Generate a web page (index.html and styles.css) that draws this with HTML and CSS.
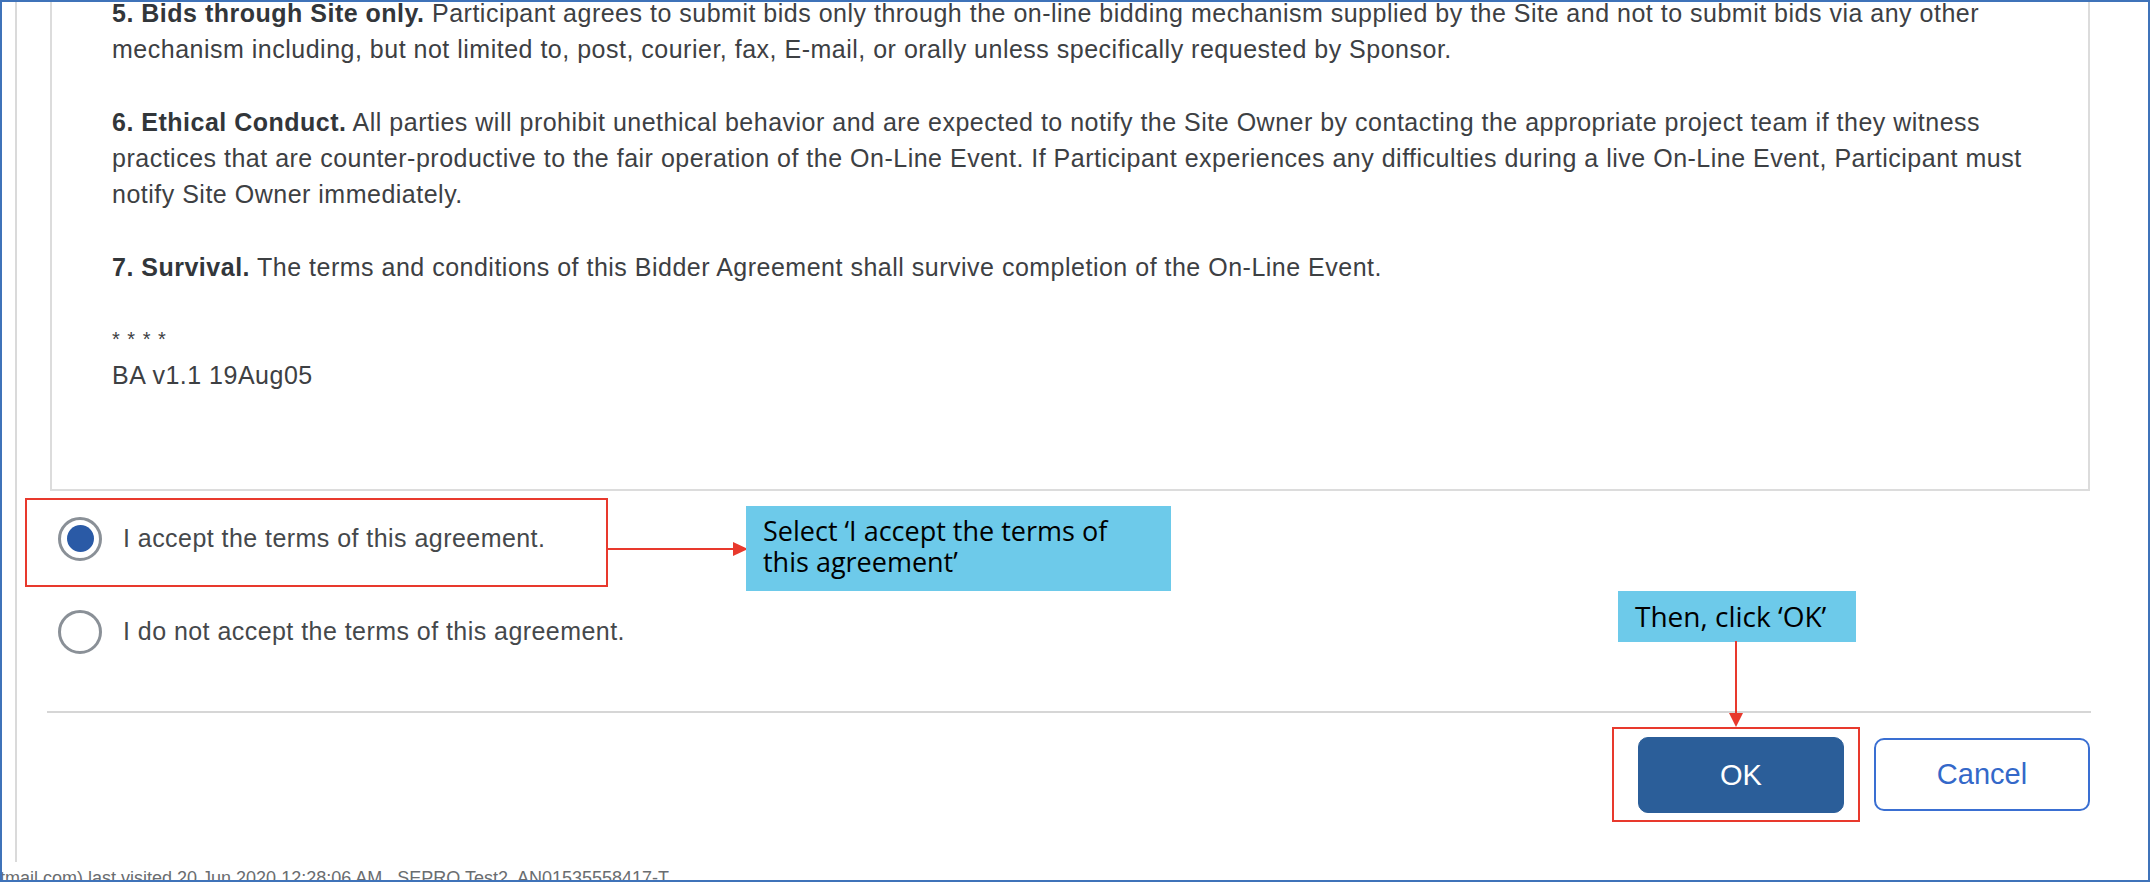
FILE: index.html
```html
<!DOCTYPE html>
<html lang="en">
<head>
<meta charset="utf-8">
<title>Bidder Agreement</title>
<link rel="stylesheet" href="styles.css">
</head>
<body>
<div class="frame">
  <div class="dialog">
    <div class="terms">
      <div class="terms-content">
        <p class="para"><b>5. Bids through Site only.</b> Participant agrees to submit bids only through the on-line bidding mechanism supplied by the Site and not to submit bids via any other<br>mechanism including, but not limited to, post, courier, fax, E-mail, or orally unless specifically requested by Sponsor.</p>
        <p class="para"><b>6. Ethical Conduct.</b> All parties will prohibit unethical behavior and are expected to notify the Site Owner by contacting the appropriate project team if they witness<br>practices that are counter-productive to the fair operation of the On-Line Event. If Participant experiences any difficulties during a live On-Line Event, Participant must<br>notify Site Owner immediately.</p>
        <p class="para"><b>7. Survival.</b> The terms and conditions of this Bidder Agreement shall survive completion of the On-Line Event.</p>
        <p class="para para-end"><span class="stars">* * * *</span><br>BA v1.1 19Aug05</p>
      </div>
    </div>
    <div class="options">
      <label class="option">
        <span class="radio radio-on"><span class="dot"></span></span>
        <span class="option-text">I accept the terms of this agreement.</span>
      </label>
      <label class="option">
        <span class="radio"></span>
        <span class="option-text">I do not accept the terms of this agreement.</span>
      </label>
    </div>
    <div class="separator"></div>
    <div class="actions">
      <button class="btn btn-primary">OK</button>
      <button class="btn btn-secondary">Cancel</button>
    </div>
  </div>
  <div class="statusline">tmail.com) last visited 20 Jun 2020 12:28:06 AM , SEPRO Test2, AN01535558417-T</div>
</div>

<div class="mark mark-accept"></div>
<svg class="arrow arrow-right" width="140" height="14" viewBox="0 0 140 14">
  <line x1="0" y1="7" x2="127" y2="7" stroke="#e8392d" stroke-width="2"/>
  <polygon points="125,0 140,7 125,14" fill="#e8392d"/>
</svg>
<div class="callout callout-select">Select ‘I accept the terms of<br>this agreement’</div>

<div class="callout callout-ok">Then, click ‘OK’</div>
<svg class="arrow arrow-down" width="14" height="86" viewBox="0 0 14 86">
  <line x1="7" y1="0" x2="7" y2="74" stroke="#e8392d" stroke-width="2"/>
  <polygon points="0,72 14,72 7,86" fill="#e8392d"/>
</svg>
<div class="mark mark-ok"></div>
</body>
</html>
```

FILE: styles.css
```css
html, body {
  margin: 0;
  padding: 0;
}

body {
  width: 2150px;
  height: 882px;
  overflow: hidden;
  position: relative;
  background: #ffffff;
  font-family: "Liberation Sans", Arial, sans-serif;
  color: #3b3e41;
}

.frame {
  box-sizing: border-box;
  width: 2150px;
  height: 882px;
  border: 2px solid #3f73b9;
  overflow: hidden;
  background: #ffffff;
}

.dialog {
  box-sizing: border-box;
  height: 860px;
  margin-left: 13px;
  border-left: 2px solid #dadada;
  display: flex;
  flex-direction: column;
}

.terms {
  box-sizing: border-box;
  width: 2040px;
  height: 489px;
  margin-left: 33px;
  border: 2px solid #dcdcdc;
  border-top: 0;
  padding-left: 60px;
  overflow: hidden;
  flex: none;
}

.terms-content {
  margin-top: -7px;
}

.para {
  margin: 0 0 37px 0;
  font-size: 25px;
  letter-spacing: 0.5px;
  line-height: 36px;
  color: #3d4043;
  white-space: nowrap;
}

.para b {
  color: #32363a;
}

.para-end {
  margin-top: -3px;
}

.stars {
  font-size: 20px;
  letter-spacing: 1px;
}

.options {
  display: flex;
  flex-direction: column;
  padding-top: 1px;
  padding-left: 41px;
  flex: none;
}

.option {
  height: 93px;
  display: flex;
  align-items: center;
  gap: 21px;
}

.radio {
  box-sizing: border-box;
  width: 44px;
  height: 44px;
  border-radius: 50%;
  border: 3px solid #8a9097;
  display: flex;
  align-items: center;
  justify-content: center;
  background: #ffffff;
  flex: none;
}

.dot {
  width: 27px;
  height: 27px;
  border-radius: 50%;
  background: #2a5aa6;
}

.option-text {
  font-size: 25px;
  letter-spacing: 0.45px;
  color: #45484b;
}

.separator {
  margin: 33px 0 0 30px;
  width: 2044px;
  height: 2px;
  background: #d6d6d6;
  flex: none;
}

.actions {
  display: flex;
  justify-content: flex-end;
  gap: 30px;
  margin-top: 24px;
  padding-right: 58px;
  flex: none;
}

.btn {
  box-sizing: border-box;
  height: 76px;
  border-radius: 10px;
  font-family: "Liberation Sans", Arial, sans-serif;
  font-size: 29px;
  cursor: pointer;
}

.btn-primary {
  width: 206px;
  background: #2b5e99;
  border: 1px solid #2b5e99;
  color: #ffffff;
}

.btn-secondary {
  width: 216px;
  height: 73px;
  margin-top: 1px;
  background: #ffffff;
  border: 2px solid #3a6fd2;
  color: #3468c9;
}

.statusline {
  margin-top: 5px;
  font-size: 18px;
  line-height: 22px;
  color: #6a6d70;
  white-space: nowrap;
  margin-left: -2px;
}

/* annotation overlays */
.mark {
  position: absolute;
  box-sizing: border-box;
  border: 2px solid #e8392d;
}

.mark-accept {
  left: 25px;
  top: 498px;
  width: 583px;
  height: 89px;
}

.mark-ok {
  left: 1612px;
  top: 727px;
  width: 248px;
  height: 95px;
}

.arrow {
  position: absolute;
}

.arrow-right {
  left: 608px;
  top: 542px;
}

.arrow-down {
  left: 1729px;
  top: 641px;
}

.callout {
  position: absolute;
  box-sizing: border-box;
  background: #6dcaea;
  color: #000000;
  font-family: "Open Sans", "Noto Sans", sans-serif;
  font-size: 27px;
  line-height: 31px;
}

.callout-select {
  left: 746px;
  top: 506px;
  width: 425px;
  height: 85px;
  padding: 9px 0 0 17px;
}

.callout-ok {
  left: 1618px;
  top: 591px;
  width: 238px;
  height: 51px;
  padding-left: 17px;
  font-size: 28px;
  line-height: 50px;
}
```
